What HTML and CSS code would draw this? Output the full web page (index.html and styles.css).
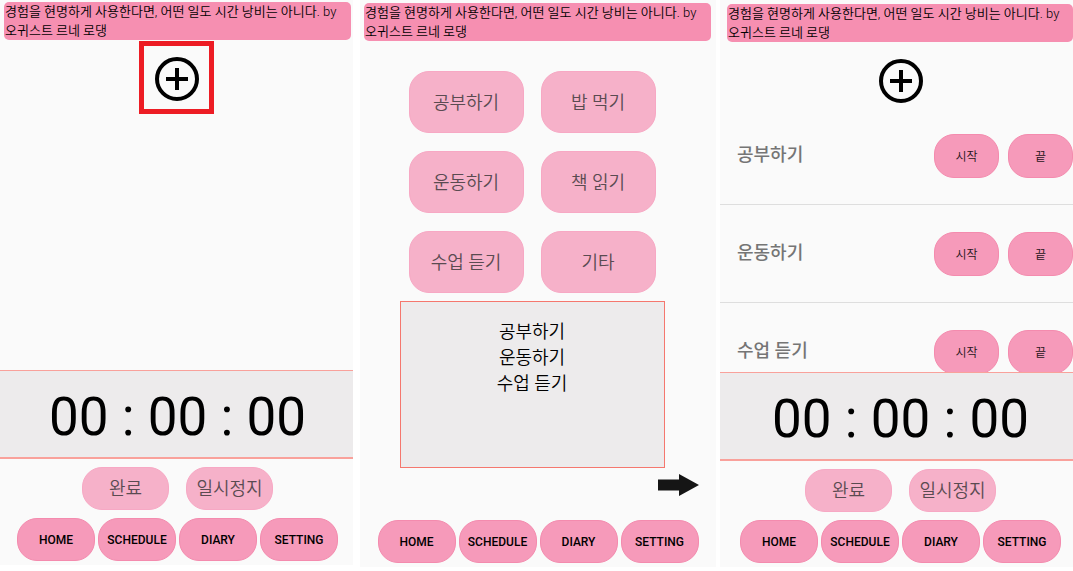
FILE: index.html
```html
<!DOCTYPE html>
<html lang="ko">
<head>
<meta charset="utf-8">
<title>시간 관리</title>
<link rel="stylesheet" href="styles.css">
</head>
<body>
<section class="screen screen-home">
  <p class="quote">경험을 현명하게 사용한다면, 어떤 일도 시간 낭비는 아니다. by 오귀스트 르네 로댕</p>
  <button class="add add-marked" aria-label="추가"><svg class="add-icon" viewBox="0 0 44 44"><circle cx="22" cy="22" r="20"/><path d="M22 11v22M11 22h22"/></svg></button>
  <div class="space"></div>
  <div class="timer">00 : 00 : 00</div>
  <div class="actions"><button class="pill soft">완료</button><button class="pill soft">일시정지</button></div>
  <nav class="tabs"><button class="pill">HOME</button><button class="pill">SCHEDULE</button><button class="pill">DIARY</button><button class="pill">SETTING</button></nav>
</section>

<section class="screen screen-pick">
  <p class="quote">경험을 현명하게 사용한다면, 어떤 일도 시간 낭비는 아니다. by 오귀스트 르네 로댕</p>
  <div class="choices">
    <button class="pill soft">공부하기</button><button class="pill soft">밥 먹기</button>
    <button class="pill soft">운동하기</button><button class="pill soft">책 읽기</button>
    <button class="pill soft">수업 듣기</button><button class="pill soft">기타</button>
  </div>
  <ul class="picked"><li>공부하기</li><li>운동하기</li><li>수업 듣기</li></ul>
  <button class="next" aria-label="다음"><svg class="next-icon" viewBox="0 0 41 22"><path d="M0 5.500H21V0L41 11L21 22V16.500H0Z"/></svg></button>
  <div class="space"></div>
  <nav class="tabs"><button class="pill">HOME</button><button class="pill">SCHEDULE</button><button class="pill">DIARY</button><button class="pill">SETTING</button></nav>
</section>

<section class="screen screen-list">
  <p class="quote">경험을 현명하게 사용한다면, 어떤 일도 시간 낭비는 아니다. by 오귀스트 르네 로댕</p>
  <button class="add" aria-label="추가"><svg class="add-icon" viewBox="0 0 44 44"><circle cx="22" cy="22" r="20"/><path d="M22 11v22M11 22h22"/></svg></button>
  <ul class="tasks">
    <li class="task"><span class="task-name">공부하기</span><button class="pill small">시작</button><button class="pill small">끝</button></li>
    <li class="task"><span class="task-name">운동하기</span><button class="pill small">시작</button><button class="pill small">끝</button></li>
    <li class="task"><span class="task-name">수업 듣기</span><button class="pill small">시작</button><button class="pill small">끝</button></li>
  </ul>
  <div class="timer">00 : 00 : 00</div>
  <div class="actions"><button class="pill soft">완료</button><button class="pill soft">일시정지</button></div>
  <nav class="tabs"><button class="pill">HOME</button><button class="pill">SCHEDULE</button><button class="pill">DIARY</button><button class="pill">SETTING</button></nav>
</section>
</body>
</html>
```
FILE: styles.css
```css
* { box-sizing: border-box; }

body {
  margin: 0;
  height: 100vh;
  min-height: 540px;
  padding-bottom: 4px;
  display: flex;
  background: #fff;
  color: #000;
  font-family: Roboto, "Noto Sans CJK KR", sans-serif;
  overflow: hidden;
}

button {
  margin: 0;
  padding: 0;
  border: 0;
  background: none;
  color: inherit;
  font: inherit;
  cursor: pointer;
}

ul { margin: 0; padding: 0; list-style: none; }

.screen {
  flex: 353 1 0;
  min-width: 0;
  display: flex;
  flex-direction: column;
  background: #fafafa;
}
.screen-home { padding-top: 2px; margin-bottom: 2px; }
.screen-pick { flex-grow: 356; padding-top: 3px; margin: 0 4px 0 7px; }
.screen-list { padding-top: 4px; }

.space { flex: 1; }

.quote {
  margin: 0 2px 0 4px;
  padding-left: 1px;
  border-radius: 5px;
  background: #f68fb1;
  font-size: 13px;
  font-weight: 350;
  line-height: 19px;
}
.screen-pick .quote { margin-right: 5px; }
.screen-list .quote { margin: 0 0 0 7px; }

.add {
  align-self: center;
  display: flex;
  justify-content: center;
  height: 65px;
  width: 75px;
  padding-top: 17px;
}
.add-marked {
  height: 73px;
  margin-top: 1px;
  padding-top: 11px;
  border: 5px solid #ed1c24;
}
.add-icon { width: 44px; height: 44px; fill: none; stroke: #000; stroke-width: 4; }

.timer {
  height: 89px;
  flex: none;
  border: solid #f9a19b;
  border-width: 1px 0 2px;
  background: #edebec;
  font-size: 53px;
  line-height: 93px;
  text-align: center;
  white-space: nowrap;
}

.pill {
  border: 1px solid #f48bae;
  border-radius: 20px;
  background: #f69aba;
}
.soft {
  padding-bottom: 3px;
  border-color: #f7a8c4;
  background: #f6b1c9;
  color: #5a4b51;
  font-size: 18px;
  font-weight: 350;
}
.small { width: 65px; height: 44px; font-size: 12px; font-weight: 350; color: #1f1519; }

.actions {
  display: flex;
  justify-content: center;
  gap: 17px;
  padding: 8px 0;
}
.actions .pill { width: 87px; height: 43px; }

.tabs {
  display: flex;
  justify-content: center;
  gap: 3px;
  padding-bottom: 4px;
}
.tabs .pill { width: 78px; height: 43px; font-size: 12px; font-weight: 500; }

.choices {
  display: grid;
  grid-template-columns: 115px 115px;
  justify-content: center;
  gap: 18px 17px;
  padding: 30px 12px 8px 0;
}
.choices .pill { height: 62px; }

.picked {
  width: 265px;
  height: 167px;
  margin: 0 12px 0 0;
  padding-top: 17px;
  align-self: center;
  border: 1px solid #f5776e;
  background: #edebec;
  font-size: 18px;
  font-weight: 350;
  line-height: 26px;
  text-align: center;
}

.next { align-self: flex-end; margin: 6px 17px 0 0; }
.next-icon { display: block; width: 41px; height: 22px; fill: #151515; }

.screen-home .actions,
.screen-home .tabs,
.screen-home .timer { padding-left: 2px; }
.screen-list .actions,
.screen-list .tabs,
.screen-list .timer { padding-left: 8px; }
.screen-list .add { margin-left: 8px; }

.tasks { flex: 1; min-height: 0; overflow: hidden; }
.task {
  height: 98px;
  display: flex;
  align-items: center;
  gap: 9px;
  padding-left: 17px;
  border-bottom: 1px solid #dedede;
}
.task-name {
  flex: 1;
  padding-bottom: 6px;
  color: #757575;
  font-size: 18px;
  font-weight: 500;
}
```
